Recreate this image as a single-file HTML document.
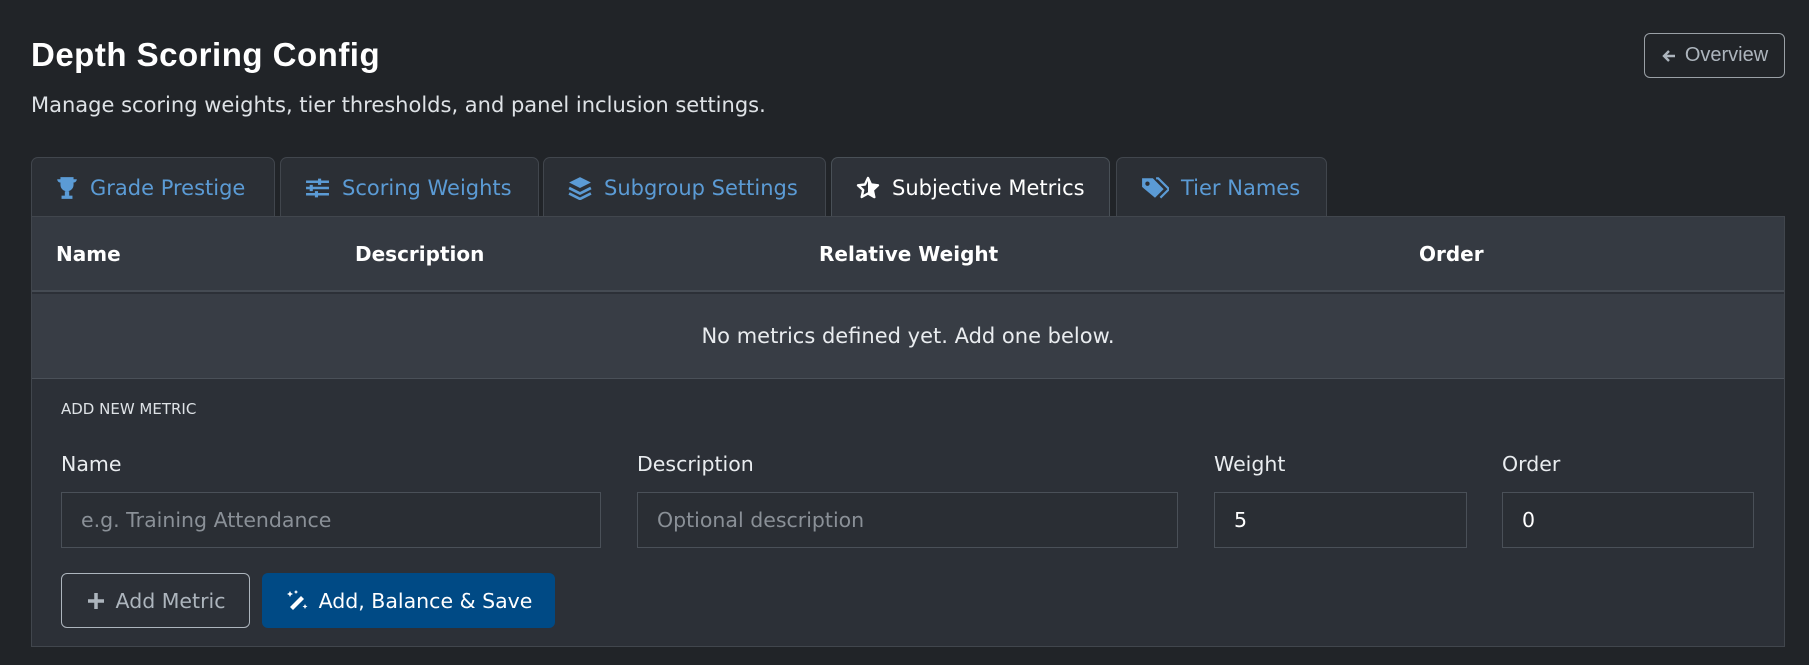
<!DOCTYPE html>
<html><head><style>
*{box-sizing:border-box;margin:0;padding:0}
body{width:1809px;height:665px;background:#212428;font-family:"DejaVu Sans",sans-serif;color:#dee2e6;position:relative;overflow:hidden}
.a{position:absolute}
h1{position:absolute;left:31px;top:36px;font-size:33px;font-weight:bold;color:#fff;font-family:"Liberation Sans",sans-serif;letter-spacing:0.5px}
.sub{left:31px;top:93px;font-size:21px;color:#dee2e6}
.ov{left:1644px;top:33px;width:141px;height:45px;border:1px solid #9aa0a6;border-radius:6px;color:#adb5bd;font-size:20px;display:flex;align-items:center;justify-content:center;gap:8px;font-family:"Liberation Sans",sans-serif}
.tab{top:157px;height:60px;border:1px solid #41464d;border-bottom:none;border-radius:7px 7px 0 0;background:#2b2f35;color:#5b9bd5;font-size:21px;display:flex;align-items:center;padding-left:24px;gap:12px}
.tab.act{background:#2e3239;color:#fff;border-color:#495057}
.panel{left:31px;top:216px;width:1754px;height:431px;border:1px solid #41464d;background:#2c3037}
.hd{left:0;top:0;width:100%;height:75px;background:#353a42;border-bottom:2px solid #454b53}
.hd span{position:absolute;top:25px;font-size:20px;font-weight:bold;color:#fff}
.row{left:0;top:77px;width:100%;height:85px;background:#383d45;border-bottom:1px solid #4a5058;display:flex;align-items:center;justify-content:center;font-size:21px;color:#e9ecef}
.lab{font-size:20.5px;color:#e9ecef}
.inp{height:56px;border:1px solid #4a5058;background:#2a2e34;font-size:20.5px;display:flex;align-items:center;padding-left:19px;color:#8a9097}
.btn{top:573px;height:55px;border-radius:6px;display:flex;align-items:center;justify-content:center;gap:10px;font-size:20.5px}
</style></head><body>
<h1>Depth Scoring Config</h1>
<div class="a sub">Manage scoring weights, tier thresholds, and panel inclusion settings.</div>
<div class="a ov"><svg width="16" height="16" viewBox="0 0 16 16"><path d="M14 8H3M8 3L3 8l5 5" stroke="#adb5bd" stroke-width="2.4" fill="none"/></svg>Overview</div>

<div class="a tab" style="left:31px;width:244px"><svg width="22" height="24" viewBox="0 0 20 22"><path d="M4 1h12v7a6 6 0 0 1-12 0z M1 3h3v3a3 3 0 0 1-3-3z M19 3h-3v3a3 3 0 0 0 3-3z M8 14h4v4H8z M5 18h10v3H5z" fill="#5b9bd5"/></svg>Grade Prestige</div>
<div class="a tab" style="left:280px;width:259px"><svg width="25" height="22" viewBox="0 0 24 20"><path d="M1 4h22M1 10h22M1 16h22" stroke="#5b9bd5" stroke-width="2.4"/><path d="M14 1v6M6 7v6M11 13v6" stroke="#5b9bd5" stroke-width="3"/></svg>Scoring Weights</div>
<div class="a tab" style="left:543px;width:283px"><svg width="24" height="24" viewBox="0 0 22 22"><path d="M11 1l10 5-10 5-10-5z" fill="#5b9bd5"/><path d="M1 11l10 5 10-5M1 16l10 5 10-5" stroke="#5b9bd5" stroke-width="2.5" fill="none"/></svg>Subgroup Settings</div>
<div class="a tab act" style="left:831px;width:279px"><svg width="24" height="24" viewBox="0 0 24 24"><path d="M12 2l3 6.5 7 .8-5.2 4.8 1.5 7L12 17.5 5.7 21l1.5-7L2 9.3l7-.8z" fill="none" stroke="#fff" stroke-width="2.4" stroke-linejoin="round"/><path d="M12 2l3 6.5 7 .8-5.2 4.8 1.5 7L12 17.5z" fill="#fff"/></svg>Subjective Metrics</div>
<div class="a tab" style="left:1116px;width:211px"><svg width="28" height="24" viewBox="0 0 26 22"><path d="M1 2h10l10 10-8 8L1 10z" fill="#5b9bd5"/><circle cx="6" cy="7" r="2" fill="#2b2f35"/><path d="M14 2h2l10 10-8 8" stroke="#5b9bd5" stroke-width="2" fill="none"/></svg>Tier Names</div>

<div class="a panel">
 <div class="a hd"><span style="left:24px">Name</span><span style="left:323px">Description</span><span style="left:787px">Relative Weight</span><span style="left:1387px">Order</span></div>
 <div class="a row">No metrics defined yet. Add one below.</div>
</div>
<div class="a" style="left:61px;top:400px;font-size:15px;color:#dee2e6">ADD NEW METRIC</div>
<div class="a lab" style="left:61px;top:452px">Name</div>
<div class="a lab" style="left:637px;top:452px">Description</div>
<div class="a lab" style="left:1214px;top:452px">Weight</div>
<div class="a lab" style="left:1502px;top:452px">Order</div>
<div class="a inp" style="left:61px;top:492px;width:540px">e.g. Training Attendance</div>
<div class="a inp" style="left:637px;top:492px;width:541px">Optional description</div>
<div class="a inp" style="left:1214px;top:492px;width:253px;color:#fff">5</div>
<div class="a inp" style="left:1502px;top:492px;width:252px;color:#fff">0</div>
<div class="a btn" style="left:61px;width:189px;border:1px solid #adb5bd;color:#adb5bd"><svg width="20" height="20" viewBox="0 0 20 20"><path d="M10 2v16M2 10h16" stroke="#adb5bd" stroke-width="3.5"/></svg>Add Metric</div>
<div class="a btn" style="left:262px;width:293px;background:#004a85;color:#fff"><svg width="24" height="24" viewBox="0 0 24 24"><path d="M8 21l-3-3L16 7l3 3z" fill="#fff"/><path d="M5 2l1 2 2 1-2 1-1 2-1-2-2-1 2-1zM11 1l.7 1.3L13 3l-1.3.7L11 5l-.7-1.3L9 3l1.3-.7zM20 15l.8 1.7 1.7.8-1.7.8L20 20l-.8-1.7-1.7-.8 1.7-.8z" fill="#fff"/></svg>Add, Balance &amp; Save</div>
</body></html>
